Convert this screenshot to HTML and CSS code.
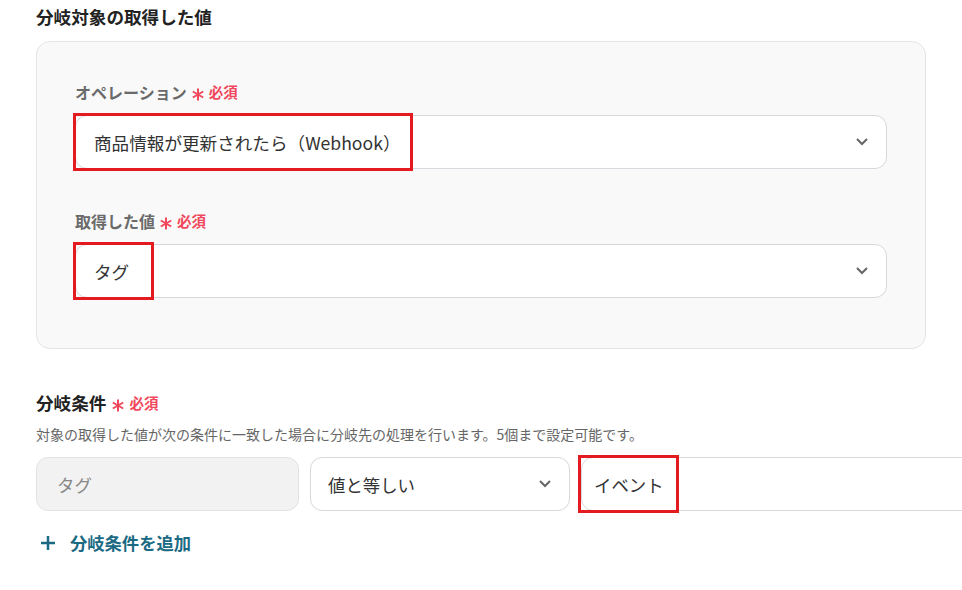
FILE: index.html
```html
<!DOCTYPE html>
<html lang="ja">

<head>
    <meta charset="UTF-8">
    <meta name="viewport" content="width=device-width, initial-scale=1.0">
    <title>分岐設定</title>
    <link rel="stylesheet" href="styles.css">
</head>

<body>
    <div class="page">

        <!-- 分岐対象 -->
        <h2 class="section-title">分岐対象の取得した値</h2>
        <div class="panel">
            <div class="field">
                <div class="label">オペレーション<span class="req"><svg class="star" width="12" height="13" viewBox="0 0 12 13"><path d="M6 0.5v12M0.8 3.5l10.4 6M0.8 9.5l10.4-6" /></svg>必須</span></div>
                <div class="select">
                    <span class="value">商品情報が更新されたら（Webhook）</span>
                    <svg class="chevron" width="12" height="8" viewBox="0 0 12 8"><polyline points="1,1 6,6 11,1" /></svg>
                    <span class="mark mark-op"></span>
                </div>
            </div>
            <div class="field">
                <div class="label">取得した値<span class="req"><svg class="star" width="12" height="13" viewBox="0 0 12 13"><path d="M6 0.5v12M0.8 3.5l10.4 6M0.8 9.5l10.4-6" /></svg>必須</span></div>
                <div class="select">
                    <span class="value">タグ</span>
                    <svg class="chevron" width="12" height="8" viewBox="0 0 12 8"><polyline points="1,1 6,6 11,1" /></svg>
                    <span class="mark mark-tag"></span>
                </div>
            </div>
        </div>

        <!-- 分岐条件 -->
        <h2 class="section-title cond-title">分岐条件<span class="req"><svg class="star" width="12" height="13" viewBox="0 0 12 13"><path d="M6 0.5v12M0.8 3.5l10.4 6M0.8 9.5l10.4-6" /></svg>必須</span></h2>
        <p class="desc">対象の取得した値が次の条件に一致した場合に分岐先の処理を行います。5個まで設定可能です。</p>
        <div class="cond-row">
            <div class="box box-disabled">タグ</div>
            <div class="box box-select">
                <span>値と等しい</span>
                <svg class="chevron" width="12" height="8" viewBox="0 0 12 8"><polyline points="1,1 6,6 11,1" /></svg>
            </div>
            <div class="box box-input">
                <span>イベント</span>
                <span class="mark mark-ev"></span>
            </div>
        </div>

        <div class="add-btn">
            <svg width="16" height="16" viewBox="0 0 16 16"><path d="M8 1v14M1 8h14" /></svg>
            <span>分岐条件を追加</span>
        </div>
    </div>
</body>

</html>
```

FILE: styles.css
```css
* {
    box-sizing: border-box;
}

body {
    margin: 0;
    background-color: #fff;
    font-family: 'Noto Sans CJK JP', 'Noto Sans', sans-serif;
    color: #333;
    overflow: hidden;
}

.page {
    padding: 5px 0 0 36px;
    width: 1200px;
}

.section-title {
    margin: 0;
    font-size: 17.6px;
    line-height: 24px;
    font-weight: 700;
    color: #222;
}

.panel {
    width: 890px;
    margin-top: 12px;
    padding: 38px 38px 50px 38px;
    background-color: #f9f9f9;
    border: 1px solid #e4e4e4;
    border-radius: 14px;
}

.field + .field {
    margin-top: 40px;
}

.label {
    display: flex;
    align-items: center;
    font-size: 16px;
    line-height: 24px;
    font-weight: 700;
    color: #6a6a6a;
}

.req {
    display: inline-flex;
    align-items: center;
    margin-left: 5px;
    font-size: 14.5px;
    font-weight: 700;
    color: #f0475c;
}

.star {
    margin-right: 5px;
    position: relative;
    top: 2px;
}

.star path {
    fill: none;
    stroke: #f0475c;
    stroke-width: 2;
}

.select {
    position: relative;
    display: flex;
    align-items: center;
    justify-content: space-between;
    height: 54px;
    margin-top: 11px;
    padding: 0 18px;
    background-color: #fff;
    border: 1px solid #d5d8dd;
    border-radius: 12px;
    font-size: 17.6px;
    color: #333;
}

.chevron polyline {
    fill: none;
    stroke: #666;
    stroke-width: 2;
}

.mark {
    position: absolute;
    top: -3px;
    bottom: -3px;
    left: -3px;
    border: 3px solid #e31b20;
}

.mark-op {
    width: 340px;
}

.mark-tag {
    width: 81px;
}

.cond-title {
    display: flex;
    align-items: center;
    margin-top: 42px;
}

.cond-title .req {
    margin-left: 6px;
}

.desc {
    margin: 9px 0 0 0;
    font-size: 14px;
    line-height: 20px;
    color: #666;
}

.cond-row {
    display: flex;
    gap: 11px;
    margin-top: 13px;
}

.box {
    position: relative;
    display: flex;
    align-items: center;
    height: 54px;
    border-radius: 12px;
    font-size: 17.4px;
}

.box-disabled {
    width: 263px;
    padding: 0 10px 0 20px;
    background-color: #f2f2f2;
    border: 1px solid #e2e2e2;
    color: #888;
}

.box-select {
    width: 260px;
    padding: 0 18px 0 17px;
    justify-content: space-between;
    background-color: #fff;
    border: 1px solid #d5d8dd;
}

.box-input {
    width: 500px;
    padding: 0 12px;
    background-color: #fff;
    border: 1px solid #d5d8dd;
}

.mark-ev {
    left: -4px;
    width: 101px;
}

.add-btn {
    display: flex;
    align-items: center;
    gap: 14px;
    margin-top: 19px;
    margin-left: 4px;
    font-size: 17.3px;
    font-weight: 700;
    color: #1b6a83;
}

.add-btn path {
    stroke: #1b6a83;
    stroke-width: 2.5;
}
```
